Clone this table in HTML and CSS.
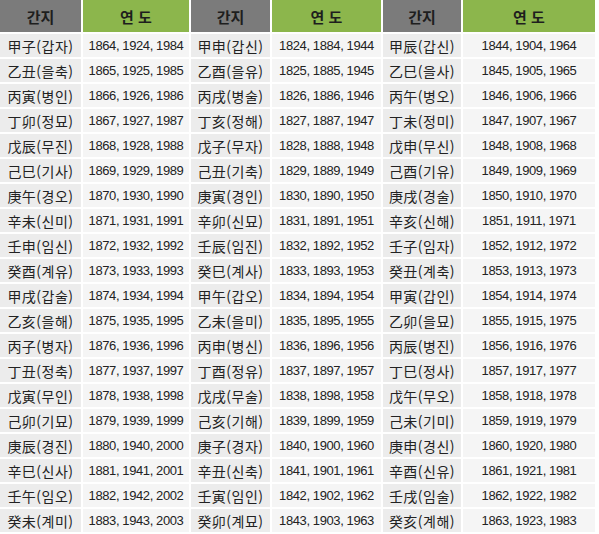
FILE: index.html
```html
<!DOCTYPE html>
<html lang="ko">
<head>
<meta charset="utf-8">
<link rel="stylesheet" href="styles.css">
</head>
<body>
<div class="table" id="t">
  <div class="h g">간지</div><div class="h y">연 도</div>
  <div class="h g">간지</div><div class="h y">연 도</div>
  <div class="h g">간지</div><div class="h y">연 도</div>
</div>
<script>
var d=[
["甲子(갑자)","1864, 1924, 1984","甲申(갑신)","1824, 1884, 1944","甲辰(갑신)","1844, 1904, 1964"],
["乙丑(을축)","1865, 1925, 1985","乙酉(을유)","1825, 1885, 1945","乙巳(을사)","1845, 1905, 1965"],
["丙寅(병인)","1866, 1926, 1986","丙戌(병술)","1826, 1886, 1946","丙午(병오)","1846, 1906, 1966"],
["丁卯(정묘)","1867, 1927, 1987","丁亥(정해)","1827, 1887, 1947","丁未(정미)","1847, 1907, 1967"],
["戊辰(무진)","1868, 1928, 1988","戊子(무자)","1828, 1888, 1948","戊申(무신)","1848, 1908, 1968"],
["己巳(기사)","1869, 1929, 1989","己丑(기축)","1829, 1889, 1949","己酉(기유)","1849, 1909, 1969"],
["庚午(경오)","1870, 1930, 1990","庚寅(경인)","1830, 1890, 1950","庚戌(경술)","1850, 1910, 1970"],
["辛未(신미)","1871, 1931, 1991","辛卯(신묘)","1831, 1891, 1951","辛亥(신해)","1851, 1911, 1971"],
["壬申(임신)","1872, 1932, 1992","壬辰(임진)","1832, 1892, 1952","壬子(임자)","1852, 1912, 1972"],
["癸酉(계유)","1873, 1933, 1993","癸巳(계사)","1833, 1893, 1953","癸丑(계축)","1853, 1913, 1973"],
["甲戌(갑술)","1874, 1934, 1994","甲午(갑오)","1834, 1894, 1954","甲寅(갑인)","1854, 1914, 1974"],
["乙亥(을해)","1875, 1935, 1995","乙未(을미)","1835, 1895, 1955","乙卯(을묘)","1855, 1915, 1975"],
["丙子(병자)","1876, 1936, 1996","丙申(병신)","1836, 1896, 1956","丙辰(병진)","1856, 1916, 1976"],
["丁丑(정축)","1877, 1937, 1997","丁酉(정유)","1837, 1897, 1957","丁巳(정사)","1857, 1917, 1977"],
["戊寅(무인)","1878, 1938, 1998","戊戌(무술)","1838, 1898, 1958","戊午(무오)","1858, 1918, 1978"],
["己卯(기묘)","1879, 1939, 1999","己亥(기해)","1839, 1899, 1959","己未(기미)","1859, 1919, 1979"],
["庚辰(경진)","1880, 1940, 2000","庚子(경자)","1840, 1900, 1960","庚申(경신)","1860, 1920, 1980"],
["辛巳(신사)","1881, 1941, 2001","辛丑(신축)","1841, 1901, 1961","辛酉(신유)","1861, 1921, 1981"],
["壬午(임오)","1882, 1942, 2002","壬寅(임인)","1842, 1902, 1962","壬戌(임술)","1862, 1922, 1982"],
["癸未(계미)","1883, 1943, 2003","癸卯(계묘)","1843, 1903, 1963","癸亥(계해)","1863, 1923, 1983"]
];
var t=document.getElementById('t');
d.forEach(function(r){r.forEach(function(v,i){var c=document.createElement('div');c.className=i%2?'c yr':'c gz';c.textContent=v;t.appendChild(c);});});
</script>
</body>
</html>
```
FILE: styles.css
```css
html, body { margin: 0; padding: 0; background: #ffffff; }
.table {
  display: grid;
  grid-template-columns: 81px 106px 79px 109px 78px 132px;
  grid-auto-rows: 23px;
  grid-template-rows: 32px;
  gap: 2px;
  width: 595px;
}
.h {
  display: flex; align-items: center; justify-content: center;
  font-family: "Noto Sans CJK KR", "Noto Sans", sans-serif;
  font-weight: 700; font-size: 15px; color: #1e1e1e;
}
.h.g { background: #7b7b7b; }
.h.y { background: #8cb64c; }
.c {
  display: flex; align-items: center; justify-content: center;
  color: #222222; white-space: nowrap;
}
.gz {
  background: #ececec;
  font-family: "Noto Sans CJK KR", sans-serif;
  font-size: 14px; letter-spacing: 0.5px;
}
.yr {
  background: #f5f5f5;
  font-family: "Liberation Sans", Arial, sans-serif;
  font-size: 13px; letter-spacing: -0.4px;
}
```
